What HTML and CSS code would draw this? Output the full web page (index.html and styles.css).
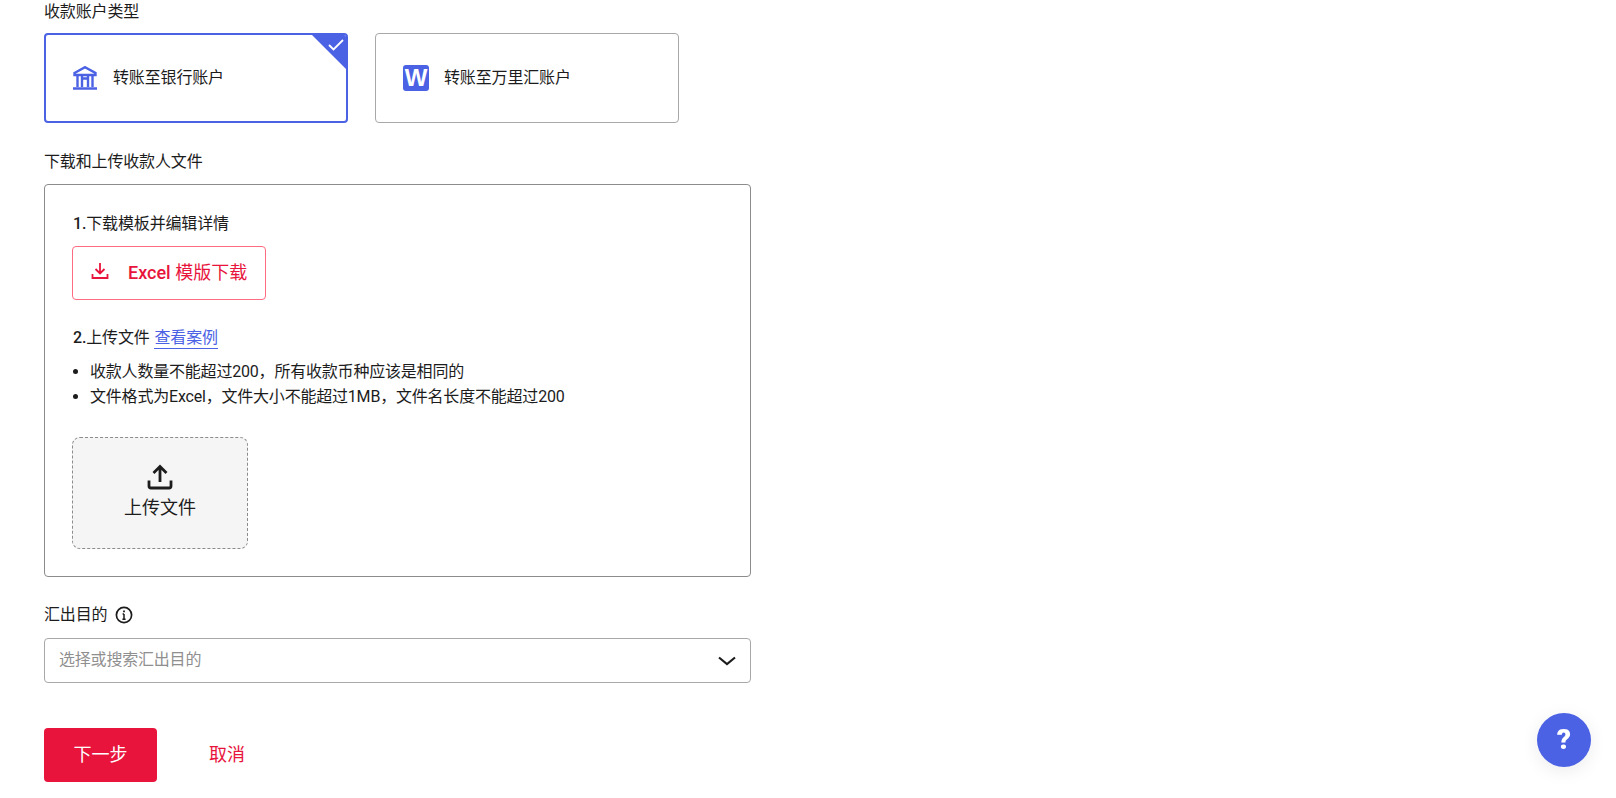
FILE: index.html
```html
<!DOCTYPE html>
<html lang="zh-CN">
<head>
<meta charset="utf-8">
<title>收款账户类型</title>
<link rel="stylesheet" href="styles.css">
</head>
<body>
<main class="page">
  <div class="label label-type">收款账户类型</div>
  <div class="type-row">
    <div class="type-card selected">
      <svg class="bank-icon" viewBox="0 0 24 24" fill="none" stroke="#4b62e4" stroke-width="2.4">
        <path d="M1.5 7 L12 1.2 L22.5 7 V9 H1.5 Z"/>
        <path d="M4.5 9 V21 M19.5 9 V21 M9 9 V21 M15 9 V21 M9 12.5 H15"/>
        <path d="M0 22.5 H24" stroke-width="2.6"/>
      </svg>
      <span class="type-text">转账至银行账户</span>
      <span class="corner"></span>
      <svg class="check" viewBox="0 0 16 12" fill="none" stroke="#fff" stroke-width="1.8"><path d="M1 6 L5.5 10.5 L15 1"/></svg>
    </div>
    <div class="type-card">
      <span class="w-icon">W</span>
      <span class="type-text">转账至万里汇账户</span>
    </div>
  </div>

  <div class="label label-file">下载和上传收款人文件</div>
  <section class="file-box">
    <div class="step"><span class="num">1.</span>下载模板并编辑详情</div>
    <button class="download" type="button">
      <svg class="dl-icon" viewBox="0 0 18 18" fill="none" stroke="#e8143c" stroke-width="1.8">
        <path d="M9 1 V11 M4.5 7 L9 11.5 L13.5 7"/>
        <path d="M1.5 12 V16 H16.5 V12" />
      </svg>
      <span><b class="latin">Excel</b> 模版下载</span>
    </button>
    <div class="step step-two"><span class="num">2.</span>上传文件 <a class="sample">查看案例</a></div>
    <ul class="rules">
      <li>收款人数量不能超过200，所有收款币种应该是相同的</li>
      <li>文件格式为Excel，文件大小不能超过1MB，文件名长度不能超过200</li>
    </ul>
    <div class="upload">
      <svg class="up-icon" viewBox="0 0 26 26" fill="none" stroke="#1c1c1c" stroke-width="2.8">
        <path d="M13 18 V2.5 M6.5 9 L13 2.5 L19.5 9"/>
        <path d="M2 16.5 V22 Q2 24 4 24 H22 Q24 24 24 22 V16.5"/>
      </svg>
      <span>上传文件</span>
    </div>
  </section>

  <div class="label label-purpose">
    <span>汇出目的</span>
    <svg class="info" viewBox="0 0 18 18" fill="none" stroke="#1c1c1c">
      <circle cx="9" cy="9" r="7.6" stroke-width="1.7"/>
      <path d="M9 8 V13.2 M7.4 13.2 H10.6 M7.6 8 H9" stroke-width="1.5"/>
      <path d="M9 4.6 V6.2" stroke-width="1.8"/>
    </svg>
  </div>
  <div class="select">
    <span class="placeholder">选择或搜索汇出目的</span>
    <svg class="chevron" viewBox="0 0 18 10" fill="none" stroke="#1c1c1c" stroke-width="2.2"><path d="M1 1.5 L9 8 L17 1.5"/></svg>
  </div>

  <div class="actions">
    <button class="next" type="button">下一步</button>
    <button class="cancel" type="button">取消</button>
  </div>
</main>
<button class="help" type="button">?</button>
</body>
</html>
```

FILE: styles.css
```css
* { box-sizing: border-box; }
html, body { margin: 0; padding: 0; background: #fff; overflow: hidden; height: 100%; }
body {
  font-family: Roboto, "Noto Sans CJK SC", sans-serif;
  font-size: 16px;
  letter-spacing: -0.15px;
  color: #1c1c1c;
}
.page { padding-left: 44px; width: 751px; }
.label { height: 20px; line-height: 20px; }
.label-type { padding-top: 2px; }
.label-file { margin-top: 29px; }
.label-purpose { margin-top: 28px; display: flex; align-items: center; gap: 8px; }

.type-row { display: flex; gap: 27px; margin-top: 13px; }
.type-card {
  position: relative;
  width: 304px;
  height: 90px;
  display: flex;
  align-items: center;
  gap: 15px;
  padding-left: 27px;
  padding-bottom: 1px;
  border: 1px solid #a8a8a8;
  border-radius: 4px;
  overflow: hidden;
}
.type-card.selected { border: 2px solid #4b62e4; padding-left: 27px; gap: 16px; }
.type-text { padding-bottom: 3px; }
.bank-icon { width: 24px; height: 24px; }
.corner {
  position: absolute;
  top: 0;
  right: 0;
  width: 0;
  height: 0;
  border-style: solid;
  border-width: 0 34px 34px 0;
  border-color: transparent #4b62e4 transparent transparent;
}
.check { position: absolute; top: 4px; right: 2px; width: 16px; height: 12px; }
.w-icon {
  width: 26px;
  height: 26px;
  border-radius: 3px;
  background: #4b62e4;
  color: #fff;
  font-family: "Liberation Sans", sans-serif;
  font-weight: 700;
  font-size: 24px;
  line-height: 26px;
  letter-spacing: 0;
  text-align: center;
}

.file-box {
  margin-top: 12px;
  height: 393px;
  padding: 27px 27px 27px;
  border: 1px solid #8c8c8c;
  border-radius: 4px;
}
.step { height: 24px; line-height: 24px; padding-left: 1px; }
.num { font-weight: 500; }
.download {
  display: flex;
  align-items: center;
  gap: 19px;
  margin-top: 10px;
  width: 194px;
  height: 54px;
  padding: 0 0 4px 18px;
  background: #fff;
  border: 1px solid #ff6b81;
  border-radius: 4px;
  color: #e8143c;
  font: inherit;
  font-size: 18px;
}
.dl-icon { width: 18px; height: 18px; flex: none; }
.latin { font-weight: 500; }
.step-two { margin-top: 26px; }
.sample { color: #4b62e4; border-bottom: 1px solid #4b62e4; padding-bottom: 1px; margin-left: 1px; }
.rules { margin: 9px 0 0; padding: 0 0 0 18px; letter-spacing: -0.2px; }
.rules li { height: 25px; line-height: 25px; }
.upload {
  margin-top: 28px;
  width: 176px;
  height: 112px;
  display: flex;
  flex-direction: column;
  align-items: center;
  justify-content: center;
  gap: 3px;
  padding-bottom: 4px;
  background: #f5f5f5;
  border: 1px dashed #8c8c8c;
  border-radius: 8px;
  font-size: 18px;
  letter-spacing: 0;
}
.up-icon { width: 26px; height: 26px; }

.info { width: 18px; height: 18px; }
.select {
  margin-top: 13px;
  height: 45px;
  display: flex;
  align-items: center;
  justify-content: space-between;
  padding: 0 14px 0 14px;
  border: 1px solid #a8a8a8;
  border-radius: 4px;
}
.placeholder { color: #8f8f8f; letter-spacing: -0.2px; padding-bottom: 5px; }
.chevron { width: 18px; height: 10px; }

.actions { display: flex; align-items: center; margin-top: 45px; }
.next {
  width: 113px;
  height: 54px;
  padding: 0 0 4px;
  background: #e8143c;
  border: 0;
  border-radius: 4px;
  color: #fff;
  font: inherit;
  font-size: 18px;
}
.cancel {
  margin-left: 52px;
  padding: 0 0 4px;
  background: none;
  border: 0;
  color: #e8143c;
  font: inherit;
  font-size: 18px;
}

.help {
  position: fixed;
  right: 25px;
  bottom: 31px;
  width: 54px;
  height: 54px;
  padding: 0;
  border: 0;
  border-radius: 50%;
  background: #4b62e4;
  box-shadow: 0 4px 18px rgba(0, 0, 0, 0.08);
  color: #fff;
  font-family: Roboto, sans-serif;
  font-weight: 900;
  font-size: 28px;
  line-height: 54px;
  text-align: center;
}
```
